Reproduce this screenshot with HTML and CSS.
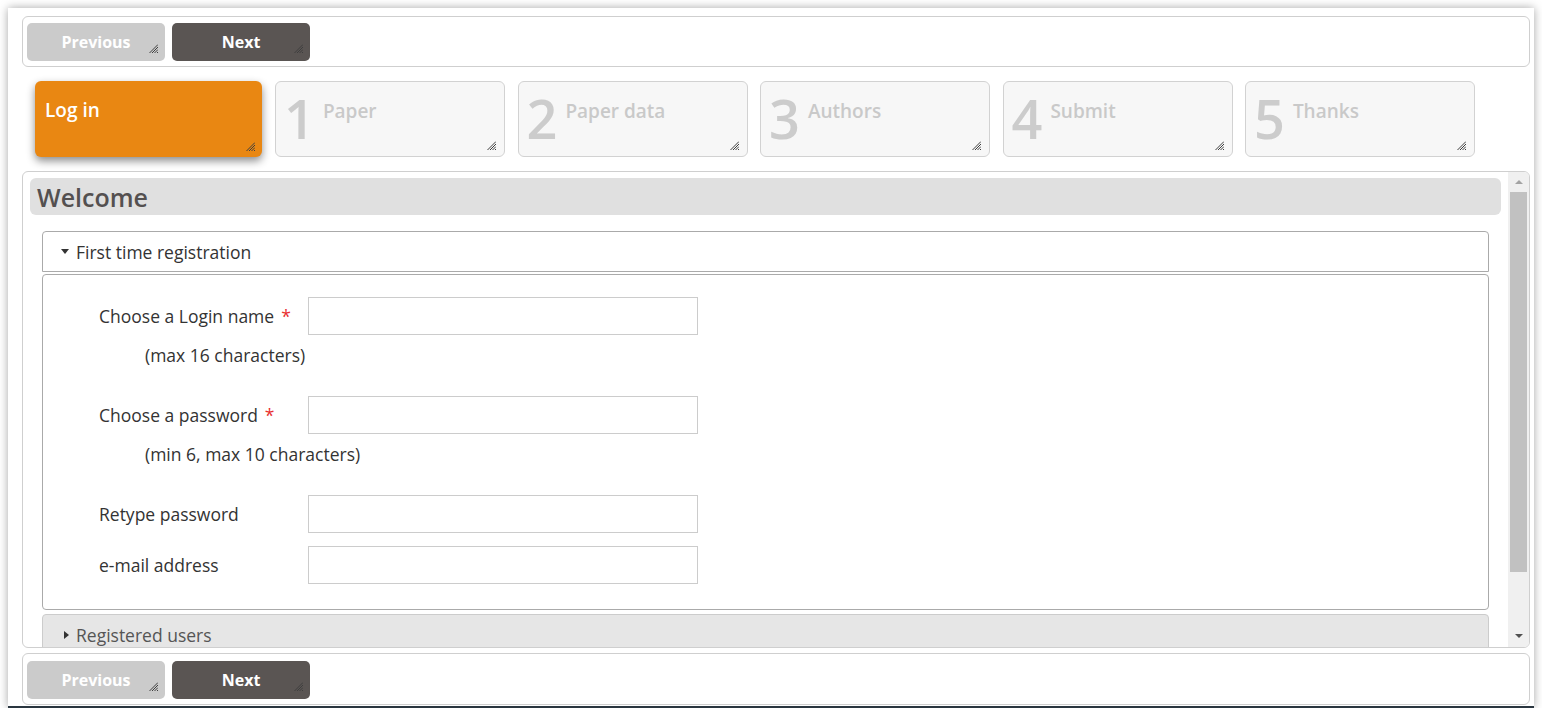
FILE: index.html
```html
<!DOCTYPE html>
<html lang="en">
<head>
<meta charset="utf-8">
<title>Submission wizard</title>
<link rel="stylesheet" href="styles.css">
</head>
<body>
<div class="window">
  <div class="toolbar">
    <button class="btn btn-prev">Previous<svg class="grip" viewBox="0 0 9 9"><path d="M0.5 9L9 0.5M3 9L9 3M5.5 9L9 5.5M8 9L9 8" /></svg></button>
    <button class="btn btn-next">Next<svg class="grip" viewBox="0 0 9 9"><path d="M0.5 9L9 0.5M3 9L9 3M5.5 9L9 5.5M8 9L9 8" /></svg></button>
  </div>

  <div class="steps">
    <div class="step step-active"><span class="step-label">Log in</span><svg class="grip" viewBox="0 0 9 9"><path d="M0.5 9L9 0.5M3 9L9 3M5.5 9L9 5.5M8 9L9 8" /></svg></div>
    <div class="step"><span class="step-num">1</span><span class="step-label">Paper</span><svg class="grip" viewBox="0 0 9 9"><path d="M0.5 9L9 0.5M3 9L9 3M5.5 9L9 5.5M8 9L9 8" /></svg></div>
    <div class="step"><span class="step-num">2</span><span class="step-label">Paper data</span><svg class="grip" viewBox="0 0 9 9"><path d="M0.5 9L9 0.5M3 9L9 3M5.5 9L9 5.5M8 9L9 8" /></svg></div>
    <div class="step"><span class="step-num">3</span><span class="step-label">Authors</span><svg class="grip" viewBox="0 0 9 9"><path d="M0.5 9L9 0.5M3 9L9 3M5.5 9L9 5.5M8 9L9 8" /></svg></div>
    <div class="step"><span class="step-num">4</span><span class="step-label">Submit</span><svg class="grip" viewBox="0 0 9 9"><path d="M0.5 9L9 0.5M3 9L9 3M5.5 9L9 5.5M8 9L9 8" /></svg></div>
    <div class="step"><span class="step-num">5</span><span class="step-label">Thanks</span><svg class="grip" viewBox="0 0 9 9"><path d="M0.5 9L9 0.5M3 9L9 3M5.5 9L9 5.5M8 9L9 8" /></svg></div>
  </div>

  <div class="panel">
    <div class="panel-main">
      <h1 class="welcome">Welcome</h1>
      <div class="fs-head fs-open"><span class="tri-down"></span>First time registration</div>
      <div class="fs-body">
        <div class="row">
          <label class="lbl">Choose a Login name<span class="req">*</span></label>
          <input class="inp" type="text">
        </div>
        <div class="hint">(max 16 characters)</div>
        <div class="row">
          <label class="lbl">Choose a password<span class="req">*</span></label>
          <input class="inp" type="password">
        </div>
        <div class="hint">(min 6, max 10 characters)</div>
        <div class="row">
          <label class="lbl">Retype password</label>
          <input class="inp" type="password">
        </div>
        <div class="row row-gap">
          <label class="lbl">e-mail address</label>
          <input class="inp" type="text">
        </div>
      </div>
      <div class="fs-head fs-closed"><span class="tri-right"></span>Registered users</div>
    </div>
    <div class="scrollbar">
      <div class="sb-up"><span class="arr-up"></span></div>
      <div class="sb-thumb"></div>
      <div class="sb-down"><span class="arr-down"></span></div>
    </div>
  </div>

  <div class="toolbar toolbar-bottom">
    <button class="btn btn-prev">Previous<svg class="grip" viewBox="0 0 9 9"><path d="M0.5 9L9 0.5M3 9L9 3M5.5 9L9 5.5M8 9L9 8" /></svg></button>
    <button class="btn btn-next">Next<svg class="grip" viewBox="0 0 9 9"><path d="M0.5 9L9 0.5M3 9L9 3M5.5 9L9 5.5M8 9L9 8" /></svg></button>
  </div>
</div>
</body>
</html>
```

FILE: styles.css
```css
* { box-sizing: border-box; }

html, body {
  margin: 0;
  padding: 0;
  background: #ffffff;
  font-family: "Open Sans", "Liberation Sans", sans-serif;
}

.window {
  margin: 8px 0 0 8px;
  width: 1526px;
  height: 700px;
  background: #ffffff;
  box-shadow: 0 0 9px rgba(0, 0, 0, 0.35);
  border-bottom: 2px solid #2a3640;
  padding: 8px 4px 0 14px;
  display: flex;
  flex-direction: column;
}

/* toolbars */
.toolbar {
  height: 51px;
  border: 1px solid #cfcfcf;
  border-radius: 6px;
  padding: 6px 4px 0 4px;
  display: flex;
  gap: 7px;
  flex: none;
}
.toolbar-bottom {
  height: 52px;
  margin-top: 5px;
  padding-top: 7px;
}

.btn {
  position: relative;
  width: 138px;
  height: 38px;
  border: none;
  border-radius: 5px;
  font-family: "Open Sans", "Liberation Sans", sans-serif;
  font-weight: 700;
  font-size: 16px;
  color: #ffffff;
  padding: 0;
  cursor: pointer;
}
.btn-prev { background: #cbcbcb; }
.btn-next { background: #5a5553; }

.grip {
  position: absolute;
  right: 7px;
  bottom: 8px;
  width: 9px;
  height: 9px;
}
.grip path {
  stroke: #3e3e3e;
  stroke-width: 1;
  fill: none;
}

/* steps */
.steps {
  margin-top: 14px;
  display: flex;
  gap: 12.5px;
  flex: none;
}
.step {
  position: relative;
  width: 230px;
  height: 76px;
  background: #f7f7f7;
  border: 1px solid #d2d2d2;
  border-radius: 6px;
  display: flex;
  align-items: flex-start;
  padding: 9px 0 0 8px;
  color: #cbcbcb;
}
.step .grip { right: 8px; bottom: 6px; }
.step-num {
  font-size: 54px;
  line-height: 54px;
  font-weight: 600;
  color: #cccccc;
  margin-right: 8px;
}
.step-label {
  font-size: 19px;
  line-height: 27px;
  font-weight: 600;
  color: #c9c9c9;
  margin-top: 7px;
}
.step-active {
  width: 227px;
  margin-left: 13px;
  margin-right: 0.5px;
  background: #e98712;
  border: none;
  padding: 16px 0 0 10px;
  box-shadow: 0 4px 9px rgba(0, 0, 0, 0.45);
}
.step-active .step-label {
  color: #ffffff;
  font-size: 19px;
  margin-top: 0;
}
.step-active .grip { right: 7px; bottom: 6px; }

/* panel */
.panel {
  margin-top: 14px;
  height: 477px;
  border: 1px solid #cfcfcf;
  border-radius: 6px;
  display: flex;
  overflow: hidden;
  flex: none;
}
.panel-main {
  flex: 1;
  overflow: hidden;
  padding-top: 6px;
}
.welcome {
  margin: 0 7px 0 7px;
  height: 37px;
  background: #e0e0e0;
  border-radius: 6px;
  padding-left: 7px;
  font-size: 25px;
  font-weight: 600;
  line-height: 38px;
  color: #545050;
}

.fs-head {
  margin: 0 19px;
  height: 41px;
  display: flex;
  align-items: center;
  font-size: 17.5px;
  color: #333333;
}
.fs-open {
  margin-top: 16px;
  border: 1px solid #aaaaaa;
  border-radius: 4px 4px 0 0;
  padding-left: 18px;
}
.fs-closed {
  margin-top: 4px;
  background: #e6e6e6;
  border: 1px solid #cccccc;
  border-radius: 4px;
  padding-left: 21px;
  color: #555555;
}
.tri-down {
  width: 0;
  height: 0;
  border-left: 4px solid transparent;
  border-right: 4px solid transparent;
  border-top: 5px solid #333333;
  margin-right: 7px;
}
.tri-right {
  width: 0;
  height: 0;
  border-top: 4px solid transparent;
  border-bottom: 4px solid transparent;
  border-left: 5px solid #333333;
  margin-right: 7px;
}

.fs-body {
  margin: 2px 19px 0 19px;
  border: 1px solid #aaaaaa;
  border-radius: 4px;
  padding: 22px 0 25px 56px;
}
.row {
  display: flex;
  align-items: center;
  height: 38px;
}
.row-gap { margin-top: 13px; }
.lbl {
  width: 209px;
  font-size: 17.5px;
  color: #333333;
}
.req {
  color: #e83030;
  margin-left: 7px;
}
.inp {
  width: 390px;
  height: 38px;
  border: 1px solid #cccccc;
  background: #ffffff;
  margin: 0;
}
.hint {
  margin: 10px 0 31px 46px;
  height: 20px;
  line-height: 20px;
  font-size: 17.5px;
  color: #333333;
}

/* scrollbar */
.scrollbar {
  width: 21px;
  background: #f0f0f0;
  display: flex;
  flex-direction: column;
  padding: 0 2px;
  flex: none;
}
.sb-up {
  height: 20px;
  display: flex;
  justify-content: center;
  align-items: center;
}
.sb-thumb {
  height: 380px;
  background: #c1c1c1;
}
.sb-down {
  flex: 1;
  display: flex;
  justify-content: center;
  align-items: flex-end;
  padding-bottom: 9px;
}
.arr-up {
  width: 0;
  height: 0;
  border-left: 4px solid transparent;
  border-right: 4px solid transparent;
  border-bottom: 4px solid #a3a3a3;
}
.arr-down {
  width: 0;
  height: 0;
  border-left: 4px solid transparent;
  border-right: 4px solid transparent;
  border-top: 4px solid #505050;
}
```
